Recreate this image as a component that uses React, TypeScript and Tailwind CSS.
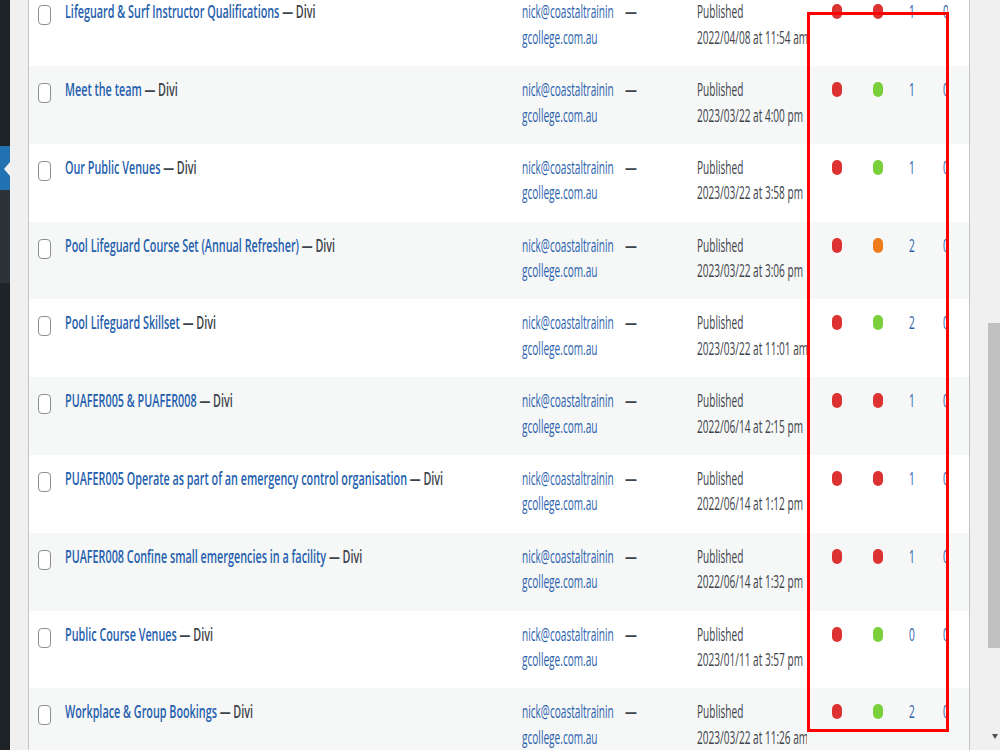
import React from "react";

type Dot = "red" | "green" | "orange";

const rows: { title: string; date: string; a: Dot; b: Dot; n: string }[] = [
  { title: "Lifeguard & Surf Instructor Qualifications", date: "2022/04/08 at 11:54 am", a: "red", b: "red", n: "1" },
  { title: "Meet the team", date: "2023/03/22 at 4:00 pm", a: "red", b: "green", n: "1" },
  { title: "Our Public Venues", date: "2023/03/22 at 3:58 pm", a: "red", b: "green", n: "1" },
  { title: "Pool Lifeguard Course Set (Annual Refresher)", date: "2023/03/22 at 3:06 pm", a: "red", b: "orange", n: "2" },
  { title: "Pool Lifeguard Skillset", date: "2023/03/22 at 11:01 am", a: "red", b: "green", n: "2" },
  { title: "PUAFER005 & PUAFER008", date: "2022/06/14 at 2:15 pm", a: "red", b: "red", n: "1" },
  { title: "PUAFER005 Operate as part of an emergency control organisation", date: "2022/06/14 at 1:12 pm", a: "red", b: "red", n: "1" },
  { title: "PUAFER008 Confine small emergencies in a facility", date: "2022/06/14 at 1:32 pm", a: "red", b: "red", n: "1" },
  { title: "Public Course Venues", date: "2023/01/11 at 3:57 pm", a: "red", b: "green", n: "0" },
  { title: "Workplace & Group Bookings", date: "2023/03/22 at 11:26 am", a: "red", b: "green", n: "2" },
];

const dotClass: Record<Dot, string> = {
  red: "bg-[#dc3232]",
  green: "bg-[#7ad03a]",
  orange: "bg-[#ee7c1b]",
};

function S({ children, className = "" }: { children: React.ReactNode; className?: string }) {
  return (
    <span className={"inline-block whitespace-nowrap origin-left scale-x-[0.56] " + className}>{children}</span>
  );
}

function Row({ r, i }: { r: (typeof rows)[number]; i: number }) {
  return (
    <div
      className={
        "flex h-[77.8px] shrink-0 items-start pt-[11px] " + (i % 2 === 1 ? "bg-[#f6f7f7]" : "bg-white")
      }
    >
      <div className="w-[36px] shrink-0 pl-[9px] pt-[6px]">
        <div className="h-[20px] w-[13px] rounded-[4px] border-[1.5px] border-[#8c8f94] bg-white" />
      </div>
      <div className="w-[457px] shrink-0 font-semibold">
        <span className="inline-block origin-left scale-x-[0.6] whitespace-nowrap">
          <span className="text-[#2460ad]">{r.title}</span>
          <span className="text-[#3c434a]"> — Divi</span>
        </span>
      </div>
      <div className="flex w-[103px] shrink-0 flex-col text-[#2b62ad]">
        <S>nick@coastaltrainin</S>
        <S>gcollege.com.au</S>
      </div>
      <div className="w-[72px] shrink-0 font-semibold text-[#3c434a]">
        <span className="inline-block origin-left scale-x-[0.66] whitespace-nowrap">—</span>
      </div>
      <div className="flex w-[110px] shrink-0 flex-col overflow-hidden text-[#3c434a]">
        <S>Published</S>
        <S>{r.date}</S>
      </div>
      <div className="w-[25px] shrink-0" />
      <div className="w-[41px] shrink-0 pt-[5px]">
        <div className={"h-[15px] w-[10px] rounded-full " + dotClass[r.a]} />
      </div>
      <div className="w-[36px] shrink-0 pt-[5px]">
        <div className={"h-[15px] w-[10px] rounded-full " + dotClass[r.b]} />
      </div>
      <div className="w-[34px] shrink-0 text-[#2b62ad]">
        <S>{r.n}</S>
      </div>
      <div className="w-[5px] shrink-0 overflow-hidden text-[#2b62ad]">
        <S>0</S>
      </div>
    </div>
  );
}

export default function App() {
  return (
    <div className="relative flex h-[750px] w-[1000px] overflow-hidden bg-[#f0f0f1] font-['Open_Sans',sans-serif] text-[18px] leading-[25.5px]">
      {/* admin sidebar sliver */}
      <aside className="flex w-[10px] shrink-0 flex-col">
        <div className="h-[146px] bg-[#1d2327]" />
        <div className="relative h-[44px] bg-[#2271b1]">
          <div className="absolute right-0 top-[16px] h-0 w-0 border-y-[7.5px] border-r-[6px] border-y-transparent border-r-[#f0f0f1]" />
        </div>
        <div className="h-[93px] bg-[#2c3338]" />
        <div className="flex-1 bg-[#1d2327]" />
      </aside>

      <div className="w-[18px] shrink-0" />

      {/* posts table */}
      <main className="flex h-full w-[942px] shrink-0 flex-col overflow-hidden border-x border-[#c3c4c7] bg-white">
        <div className="-mt-[11.8px] flex flex-col">
          {rows.map((r, i) => (
            <Row key={i} r={r} i={i} />
          ))}
        </div>
      </main>

      <div className="w-[18px] shrink-0" />

      {/* scrollbar */}
      <div className="flex w-[12px] shrink-0 flex-col bg-[#f0f0f0]">
        <div className="h-[323px]" />
        <div className="h-[325px] bg-[#c1c1c1]" />
        <div className="flex-1" />
        <div className="flex h-[16px] items-start justify-center pl-[1px]">
          <svg width="6" height="5" viewBox="0 0 6 5">
            <path d="M0 0H6L3 5Z" fill="#505050" />
          </svg>
        </div>
      </div>

      {/* red annotation box */}
      <div className="pointer-events-none absolute left-[807px] top-[12px] h-[720px] w-[142px] border-[3px] border-[#ff0000]" />
    </div>
  );
}
